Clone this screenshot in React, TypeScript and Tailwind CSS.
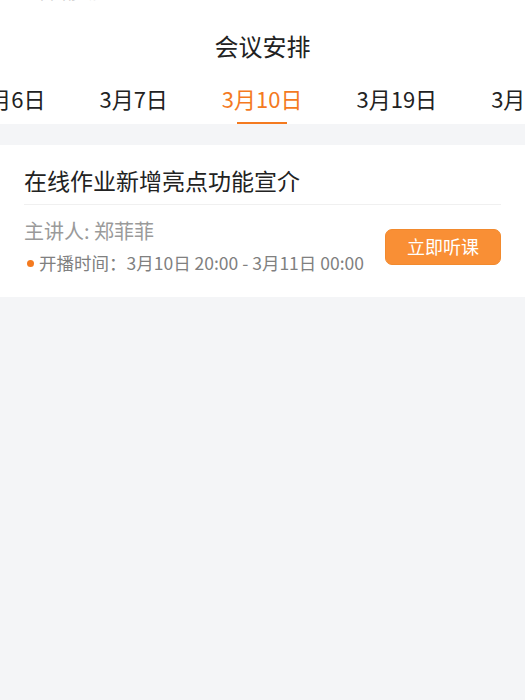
import React from "react";

const tabs = ["3月6日", "3月7日", "3月10日", "3月19日", "3月20日"];
const ACTIVE = 2;

const App: React.FC = () => {
  return (
    <div
      className="min-h-[700px] bg-[#f4f5f7]"
      style={{ fontFamily: '"Noto Sans CJK SC", "Noto Sans", sans-serif' }}
    >
      {/* header */}
      <div className="bg-white">
        <div className="h-[4px] overflow-hidden">
          <div className="-mt-[18px] pl-[34px] text-[16px] leading-[20px] text-[#c8c8c8]">
            中国移动
          </div>
        </div>
        <div className="pt-[28px] pb-[16px] text-center text-[24px] leading-[28px] text-[#222]">
          会议安排
        </div>
        <div className="flex h-[48px] overflow-hidden">
          {tabs.map((t, i) => (
            <div
              key={t}
              className={
                "flex shrink-0 flex-col items-center px-[27px] " +
                (i === 0 ? "-ml-[50px]" : "")
              }
            >
              <div
                className={
                  "text-[22px] leading-[44px] whitespace-nowrap " +
                  (i === ACTIVE ? "text-[#f47a1f]" : "text-[#222]")
                }
              >
                {t}
              </div>
              {i === ACTIVE && <div className="mt-[2px] h-[2px] w-[50px] bg-[#f47a1f]" />}
            </div>
          ))}
        </div>
      </div>

      {/* list */}
      <div className="pt-[21px]">
        <div className="bg-white px-[24px] pt-[21px] pb-[23px]">
          <div className="text-[23px] leading-[28px] text-[#222]">在线作业新增亮点功能宣介</div>
          <div className="mt-[10px] h-[1px] bg-[#f0f0f0]" />
          <div className="mt-[14px] flex items-center justify-between">
            <div>
              <div className="text-[20px] leading-[24px] text-[#9a9a9a]">主讲人: 郑菲菲</div>
              <div className="mt-[9px] flex items-center text-[17.5px] leading-[22px] text-[#808080]">
                <span className="mr-[5px] ml-[3px] h-[7px] w-[7px] rounded-full bg-[#f47a1f]" />
                开播时间：3月10日 20:00 - 3月11日 00:00
              </div>
            </div>
            <button className="h-[36px] w-[116px] rounded-[7px] border border-[#f28a2e] bg-[#f98f35] text-[18px] text-white">
              立即听课
            </button>
          </div>
        </div>
      </div>
    </div>
  );
};

export default App;
